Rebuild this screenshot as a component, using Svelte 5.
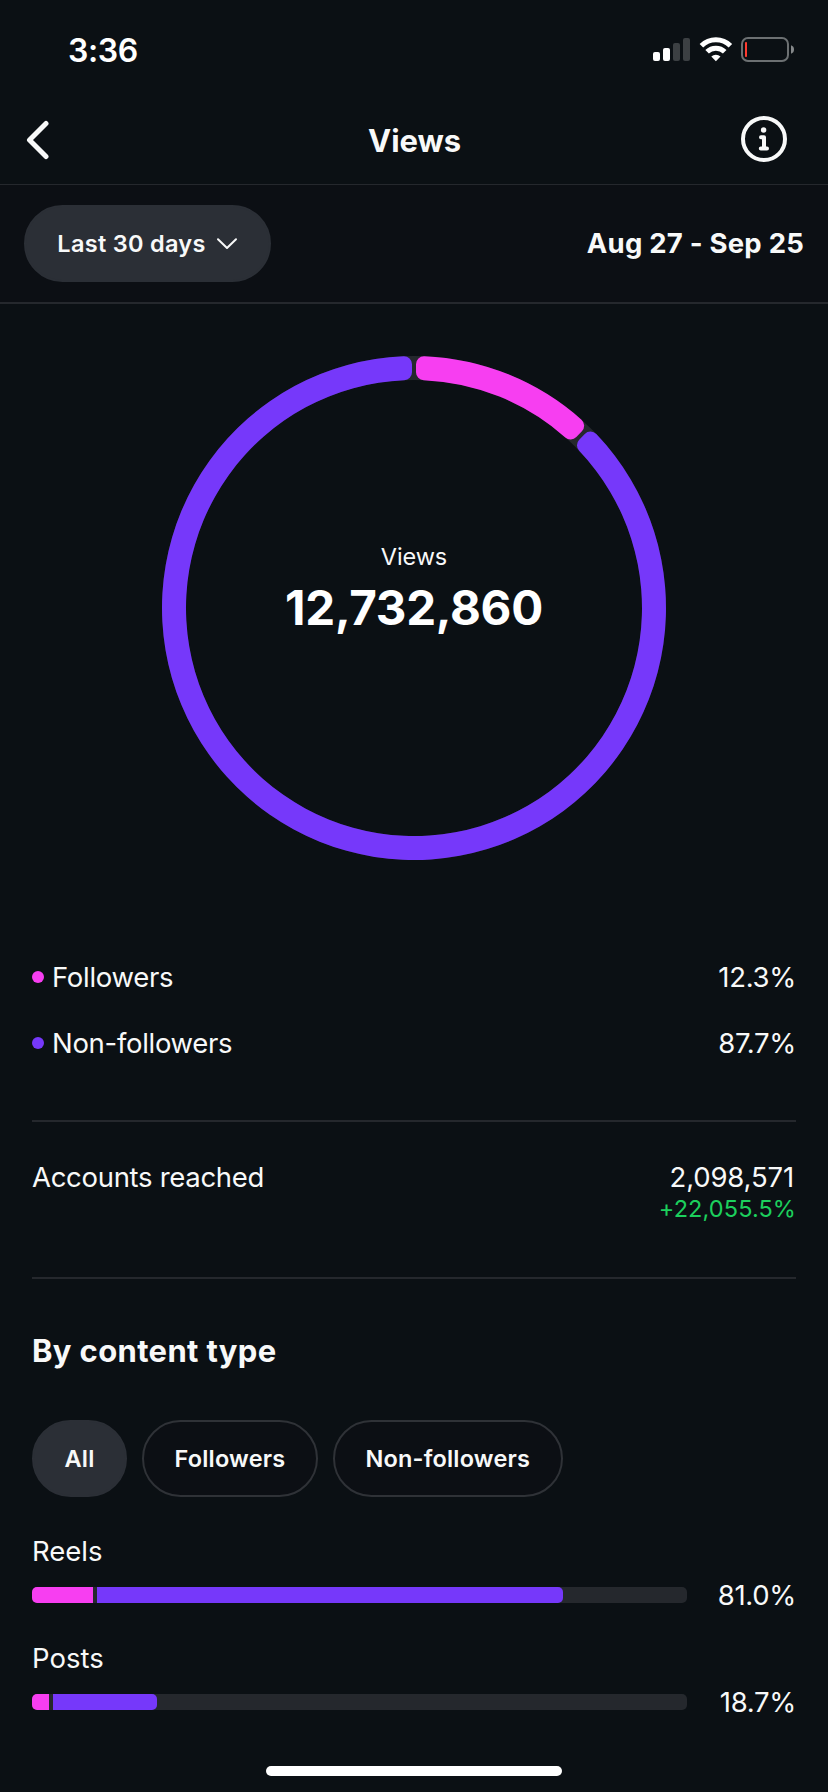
<script>
  const CX = 254, CY = 254, R = 252, r = 228, PAD = 2, C = 8;

  // Ring segment with rounded corners and straight, parallel gaps between neighbours.
  function segment(a0, a1) {
    const pt = (a, u, v) => {
      const s = Math.sin(a), c = Math.cos(a);
      return `${(CX + u * s + v * c).toFixed(2)} ${(CY - u * c + v * s).toFixed(2)}`;
    };
    const o = Math.asin((PAD + C) / (R - C));
    const i = Math.asin((PAD + C) / (r + C));
    const uo = Math.sqrt((R - C) ** 2 - (PAD + C) ** 2);
    const ui = Math.sqrt((r + C) ** 2 - (PAD + C) ** 2);
    const large = a1 - a0 > Math.PI ? 1 : 0;
    return [
      `M${pt(a0, uo, PAD)}`,
      `A${C} ${C} 0 0 1 ${pt(a0 + o, R, 0)}`,
      `A${R} ${R} 0 ${large} 1 ${pt(a1 - o, R, 0)}`,
      `A${C} ${C} 0 0 1 ${pt(a1, uo, -PAD)}`,
      `L${pt(a1, ui, -PAD)}`,
      `A${C} ${C} 0 0 1 ${pt(a1 - i, r, 0)}`,
      `A${r} ${r} 0 ${large} 0 ${pt(a0 + i, r, 0)}`,
      `A${C} ${C} 0 0 1 ${pt(a0, ui, PAD)}`,
      'Z'
    ].join('');
  }

  const TAU = Math.PI * 2;
  const split = TAU * 0.1222;

  const legend = [
    { name: 'Followers', value: '12.3%', color: '#f73ef1' },
    { name: 'Non-followers', value: '87.7%', color: '#7638fa' }
  ];
  const types = [
    { name: 'Reels', value: '81.0%', a: 61, b: 466 },
    { name: 'Posts', value: '18.7%', a: 17, b: 104 }
  ];
  const tabs = ['All', 'Followers', 'Non-followers'];
  let active = $state('All');
</script>

<div class="screen">
  <div class="status">
    <span class="time">3:36</span>
    <svg width="142" height="26" viewBox="0 0 142 26">
      <rect x="0" y="15" width="7" height="9" rx="2" fill="#fff" />
      <rect x="10" y="11" width="7" height="13" rx="2" fill="#fff" />
      <rect x="20" y="6" width="7" height="18" rx="2" fill="#3c4043" />
      <rect x="30" y="1" width="7" height="23" rx="2" fill="#3c4043" />
      <g fill="none" stroke="#fff" stroke-width="5">
        <path d="M48.4 8.8A20.5 20.5 0 0 1 77.4 8.8" />
        <path d="M54.1 14.8A12.4 12.4 0 0 1 71.7 14.8" />
      </g>
      <path d="M62.9 24.2L58.3 19.5A6.6 6.6 0 0 1 67.5 19.5Z" fill="#fff" />
      <rect x="89" y="1" width="46" height="23" rx="6" fill="none" stroke="#6c7072" stroke-width="2" />
      <rect x="92" y="5" width="2" height="15" rx=".8" fill="#ff3b30" />
      <path d="M138 8.3Q141 9.3 141 12.5T138 16.7Z" fill="#85888a" />
    </svg>
  </div>

  <header>
    <button class="icon" aria-label="Back">
      <svg width="24" height="40" viewBox="0 0 24 40">
        <path d="M20 3.5L3.5 20L20 36.5" fill="none" stroke="#f8f9f9" stroke-width="5" stroke-linecap="round" stroke-linejoin="round" />
      </svg>
    </button>
    <h1>Views</h1>
    <button class="icon" aria-label="Info">
      <svg width="46" height="46" viewBox="0 0 46 46">
        <circle cx="23" cy="23" r="21" fill="none" stroke="#f8f9f9" stroke-width="4" />
        <circle cx="22.6" cy="14" r="2.7" fill="#f8f9f9" />
        <path d="M20 21.2H23V32.6M19.8 32.6H26" fill="none" stroke="#f8f9f9" stroke-width="4" stroke-linecap="round" stroke-linejoin="round" />
      </svg>
    </button>
  </header>

  <div class="filter">
    <button class="pill filled range">
      <span>Last 30 days</span>
      <svg width="22" height="14" viewBox="0 0 22 14">
        <path d="M2 2.2L11 11L20 2.2" fill="none" stroke="#f8f9f9" stroke-width="2" stroke-linecap="round" stroke-linejoin="round" />
      </svg>
    </button>
    <span class="dates">Aug 27 - Sep 25</span>
  </div>

  <main>
    <div class="chart">
      <svg width="508" height="508" viewBox="0 0 508 508">
        <circle cx={CX} cy={CY} r="240" fill="none" stroke="#25282d" stroke-width="24" />
        <path d={segment(0, split)} fill="#f73ef1" />
        <path d={segment(split, TAU)} fill="#7638fa" />
      </svg>
      <div class="total">
        <span class="label">Views</span>
        <strong>12,732,860</strong>
      </div>
    </div>

    <div class="legend">
      {#each legend as item}
        <div class="row">
          <i class="dot" style:background={item.color}></i>
          <span class="name">{item.name}</span>
          <span class="pct">{item.value}</span>
        </div>
      {/each}
    </div>

    <div class="reached">
      <span class="name">Accounts reached</span>
      <div class="figures">
        <span class="count">2,098,571</span>
        <span class="growth">+22,055.5%</span>
      </div>
    </div>

    <h2>By content type</h2>

    <div class="tabs">
      {#each tabs as tab}
        <button class="pill" class:filled={active === tab} onclick={() => (active = tab)}>{tab}</button>
      {/each}
    </div>

    {#each types as t}
      <div class="type">
        <span class="type-name">{t.name}</span>
        <div class="line">
          <div class="track">
            <div class="seg pink" style:width="{t.a}px"></div>
            <div class="seg violet" style:width="{t.b}px"></div>
          </div>
          <span class="pct">{t.value}</span>
        </div>
      </div>
    {/each}
  </main>

  <div class="home"></div>
</div>

<style>
  :global(body) {
    background: #0b1014;
  }
  .screen {
    box-sizing: border-box;
    width: 828px;
    height: 1792px;
    overflow: hidden;
    display: flex;
    flex-direction: column;
    background: #0b1014;
    color: #f8f9f9;
    font-family: Inter, Roboto, sans-serif;
    font-size: 27.5px;
    line-height: 34px;
  }
  button {
    font: inherit;
    color: inherit;
    background: none;
    border: 0;
    padding: 0;
  }
  svg {
    display: block;
    flex: none;
  }
  .status {
    height: 99px;
    display: flex;
    justify-content: space-between;
    align-items: center;
    padding: 0 33px 0 68px;
    color: #fff;
  }
  .time {
    font-size: 32px;
    font-weight: 600;
    letter-spacing: -0.4px;
    padding-top: 3px;
  }
  header {
    height: 85px;
    border-bottom: 1px solid #25282d;
    display: grid;
    grid-template-columns: 1fr auto 1fr;
    align-items: center;
    padding: 0 41px 0 26px;
  }
  header .icon:last-child {
    justify-self: end;
    margin-bottom: 6px;
  }
  header .icon:first-child {
    margin-bottom: 3px;
  }
  h1,
  h2 {
    margin: 0;
    font-size: 31px;
    font-weight: 700;
  }
  h1 {
    padding: 0 0 2px 16px;
    letter-spacing: -0.1px;
  }
  .filter {
    height: 117px;
    border-bottom: 2px solid #25282d;
    background: #0c0f14;
    display: flex;
    align-items: center;
    justify-content: space-between;
    padding: 0 24px;
  }
  .pill {
    height: 77px;
    box-sizing: border-box;
    border: 2px solid #2f3237;
    border-radius: 39px;
    padding: 0 30.5px;
    background: #0c0f14;
    font-size: 23.5px;
    font-weight: 600;
    letter-spacing: 0.2px;
    display: flex;
    align-items: center;
    justify-content: center;
    white-space: nowrap;
  }
  .pill.filled {
    background: #2b2f36;
    border-color: #2b2f36;
  }
  .range {
    width: 247px;
    padding: 0;
    gap: 10px;
    letter-spacing: 0.3px;
  }
  .dates {
    font-weight: 700;
    letter-spacing: 0.22px;
    padding-bottom: 2px;
  }
  main {
    flex: 1;
    display: flex;
    flex-direction: column;
    padding: 0 32px;
  }
  .chart {
    display: grid;
    place-items: center;
    padding-top: 50px;
  }
  .chart > * {
    grid-area: 1 / 1;
  }
  .total {
    display: flex;
    flex-direction: column;
    align-items: center;
    padding-bottom: 36px;
    gap: 6px;
  }
  .total .label {
    font-size: 23.5px;
    line-height: 30px;
    letter-spacing: -0.1px;
  }
  .total strong {
    font-size: 47.5px;
    line-height: 60px;
    font-weight: 700;
    letter-spacing: -0.3px;
    color: #fff;
  }
  .legend {
    padding: 82px 0 44px;
    border-bottom: 2px solid #25282d;
  }
  .row {
    height: 66px;
    display: flex;
    align-items: center;
  }
  .dot {
    width: 12px;
    height: 12px;
    border-radius: 50%;
    margin-right: 8px;
  }
  .name {
    letter-spacing: -0.3px;
  }
  .pct {
    margin-left: auto;
    letter-spacing: -0.3px;
  }
  .reached {
    height: 157px;
    box-sizing: border-box;
    border-bottom: 2px solid #25282d;
    padding-top: 38px;
    display: flex;
    justify-content: space-between;
  }
  .figures {
    display: flex;
    flex-direction: column;
    align-items: flex-end;
  }
  .count {
    letter-spacing: -0.15px;
    padding-right: 2px;
  }
  .growth {
    font-size: 23.5px;
    line-height: 30px;
    letter-spacing: 0.1px;
    color: #1cd05d;
  }
  h2 {
    height: 40px;
    line-height: 40px;
    margin: 52px 0 49px;
    letter-spacing: 0.35px;
  }
  .tabs {
    display: flex;
    gap: 15px;
    margin-bottom: 37px;
  }
  .type {
    height: 107px;
    display: flex;
    flex-direction: column;
    gap: 10px;
  }
  .line {
    display: flex;
    align-items: center;
  }
  .track {
    width: 655px;
    height: 16px;
    border-radius: 5px;
    overflow: hidden;
    background: #25282d;
    display: flex;
    gap: 4px;
  }
  .seg {
    height: 16px;
  }
  .pink {
    background: #f73ef1;
  }
  .violet {
    background: #7638fa;
    border-radius: 0 5px 5px 0;
  }
  .home {
    width: 296px;
    height: 10px;
    border-radius: 5px;
    background: #fff;
    margin: 0 auto 16px;
  }
</style>
